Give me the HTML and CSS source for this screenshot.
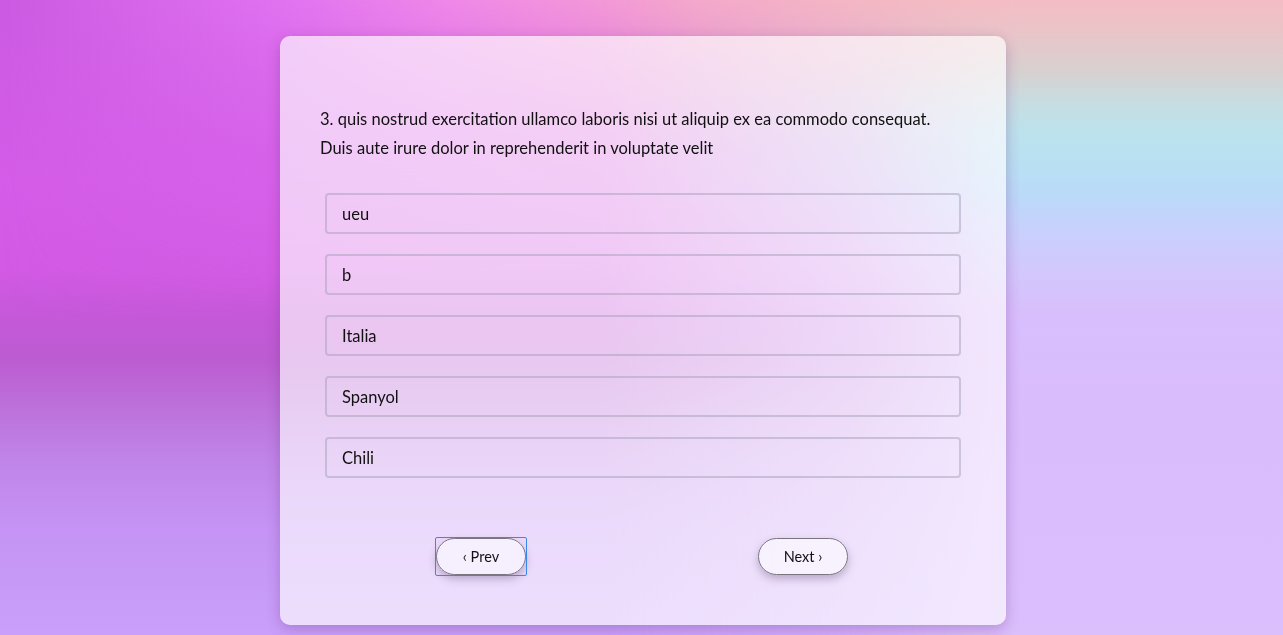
FILE: index.html
```html
<!DOCTYPE html>
<html lang="en">
<head>
<meta charset="utf-8">
<title>Quiz</title>
<link rel="stylesheet" href="styles.css">
</head>
<body>
<div class="bg">
  <div class="bg-top"></div>
  <div class="bg-right"></div>
</div>
<main class="card">
  <p class="question">3. quis nostrud exercitation ullamco laboris nisi ut aliquip ex ea commodo consequat. Duis aute irure dolor in reprehenderit in voluptate velit</p>
  <ul class="options">
    <li class="option">ueu</li>
    <li class="option">b</li>
    <li class="option">Italia</li>
    <li class="option">Spanyol</li>
    <li class="option">Chili</li>
  </ul>
  <div class="nav">
    <button class="btn btn-focus">‹ Prev</button>
    <button class="btn">Next ›</button>
  </div>
</main>
</body>
</html>
```

FILE: styles.css
```css
* { box-sizing: border-box; }
html, body { margin: 0; height: 100%; }
body {
  font-family: "Lato", "Open Sans", sans-serif;
  color: #111;
  overflow: hidden;
  position: relative;
  background: #d58ef0;
}
.bg {
  position: fixed;
  inset: 0;
  z-index: 0;
  background: linear-gradient(180deg,
    #cc5ae2 0px, #d45ce8 180px, #d25ae4 270px, #c458d8 320px, #bc5cd2 360px,
    #bc72da 410px, #c084e8 460px, #c594f4 530px, #c99ffb 635px);
}
.bg-top {
  position: absolute;
  inset: 0;
  background: linear-gradient(90deg, rgba(222,108,240,0) 0px, #e072f0 280px, #ee88e8 450px, #f294dc 560px, #f4a4cc 700px, #f4b0c4 850px, #f0bcbc 1000px);
  -webkit-mask-image: linear-gradient(180deg, #000 0px, rgba(0,0,0,0.7) 60px, rgba(0,0,0,0.3) 150px, transparent 320px);
  mask-image: linear-gradient(180deg, #000 0px, rgba(0,0,0,0.7) 60px, rgba(0,0,0,0.3) 150px, transparent 320px);
}
.bg-right {
  position: absolute;
  inset: 0;
  background: linear-gradient(180deg,
    #f4bcc4 0px, #eac4c8 30px, #d8d0d0 70px, #c8dce0 100px, #bce2ec 130px,
    #b8e0f4 170px, #bcd8fa 200px, #c8d0fc 230px, #d2c8fc 270px, #d8bffc 310px,
    #d9bcfc 400px, #dbbefc 635px);
  -webkit-mask-image: linear-gradient(90deg, transparent 600px, rgba(0,0,0,0.5) 850px, #000 1020px);
  mask-image: linear-gradient(90deg, transparent 600px, rgba(0,0,0,0.5) 850px, #000 1020px);
}
.card {
  position: relative;
  z-index: 1;
  width: 726px;
  height: 589px;
  margin: 36px 0 0 calc(50% - 361.5px);
  padding: 69px 40px 50px;
  border-radius: 10px;
  background: rgba(255,255,255,0.66);
  box-shadow: 0 4px 14px rgba(90,40,110,0.28);
  display: flex;
  flex-direction: column;
}
.question {
  margin: 0;
  font-size: 16.5px;
  line-height: 29px;
  padding-right: 20px;
}
.options {
  list-style: none;
  margin: 30px 5px 0;
  padding: 0;
  display: flex;
  flex-direction: column;
  gap: 20px;
}
.option {
  height: 41px;
  border: 2px solid rgba(165,160,185,0.5);
  border-radius: 4px;
  padding-left: 15px;
  display: flex;
  align-items: center;
  font-size: 16.5px;
}
.nav {
  margin-top: 60px;
  padding-right: 2px;
  display: flex;
  justify-content: space-around;
}
.btn {
  position: relative;
  width: 90px;
  height: 37px;
  border-radius: 19px;
  border: 1px solid #7a7680;
  background: rgba(255,255,255,0.55);
  font-family: inherit;
  font-size: 14.5px;
  color: #111;
  box-shadow: 0 4px 8px rgba(60,40,80,0.3);
  cursor: pointer;
  padding: 0;
}
.btn-focus::after {
  content: "";
  position: absolute;
  inset: -2px;
  border: 1px solid #3b86ec;
  border-radius: 2px;
  pointer-events: none;
}
```
